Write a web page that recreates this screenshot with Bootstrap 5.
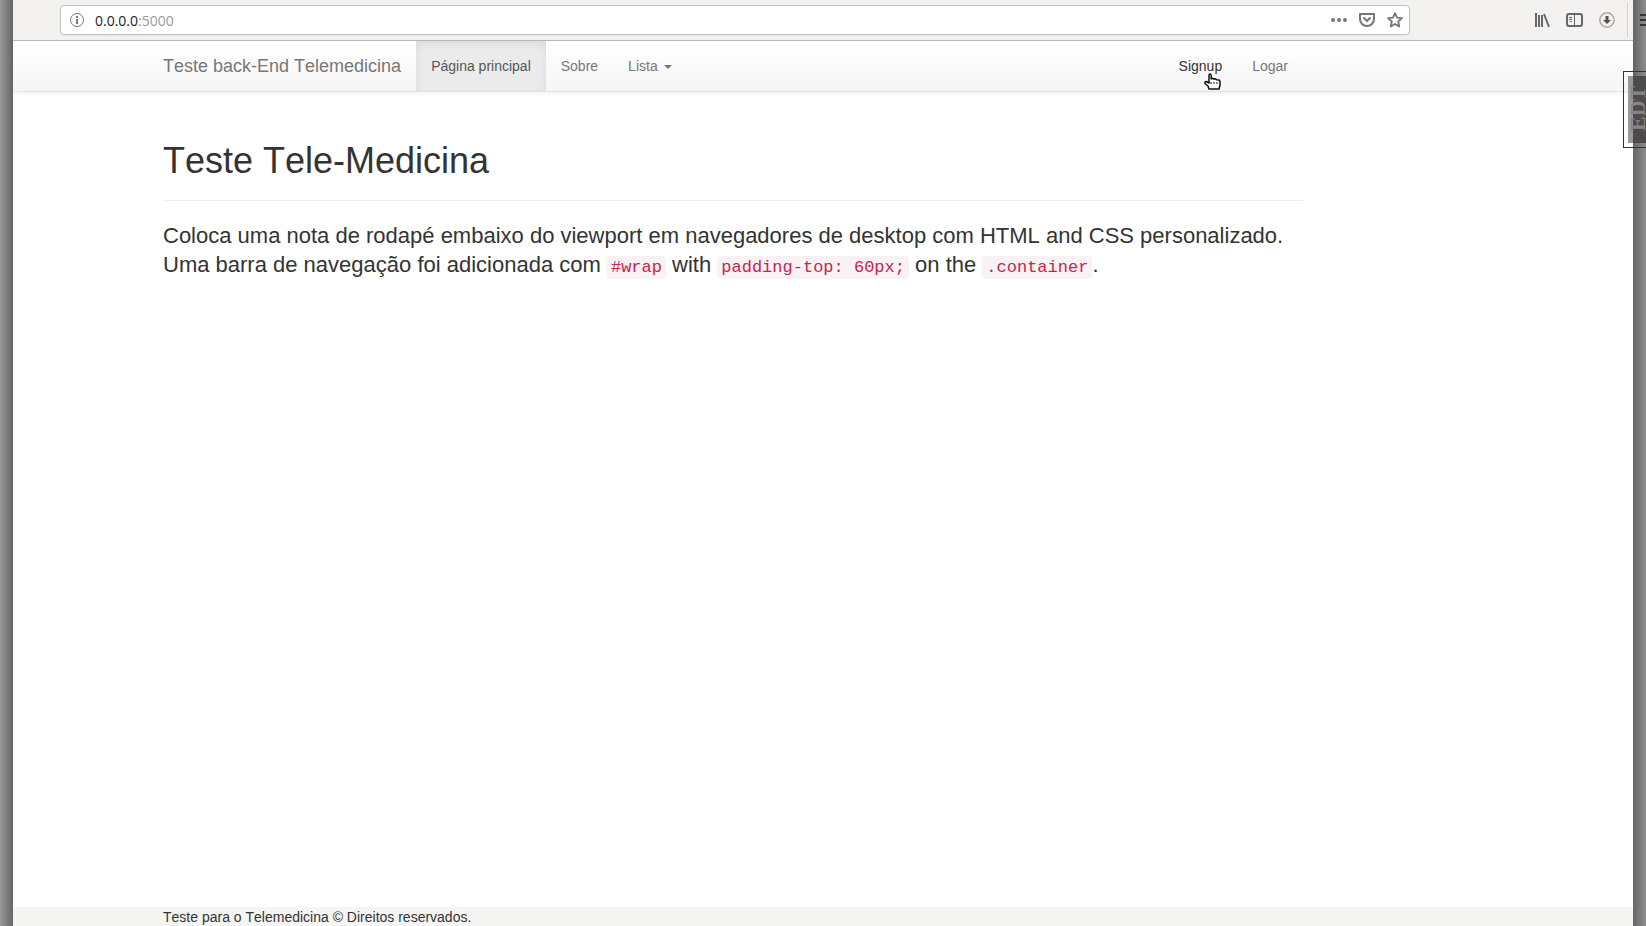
<!DOCTYPE html>
<html lang="pt-BR">
<head>
<meta charset="utf-8">
<meta name="viewport" content="width=device-width, initial-scale=1">
<title>Teste Tele-Medicina</title>
<link href="https://cdn.jsdelivr.net/npm/bootstrap@5.3.0/dist/css/bootstrap.min.css" rel="stylesheet">
<style>
  body { font-family: "Liberation Sans", Arial, sans-serif; font-size: 14px; line-height: 20px; font-kerning: none; color: #333; background: #fff; }
  .edge { flex: 0 0 13px; background: linear-gradient(90deg, #999, #666); }
  .edge-right { background: linear-gradient(90deg, #666, #8c8c8c); }
  .toolbar { height: 41px; background: #f3f2f0; border-bottom: 1px solid #bdbab7; padding: 5px 0 5px 47px; color: #66696b; }
  .address { height: 30px; margin-right: 124px; background: #fff; border: 1px solid #c5c1bd; border-radius: 4px; padding: 0 6px 0 8px; box-shadow: 0 1px 2px #0000000d; }
  .address-text { font: 14px "Open Sans", sans-serif; color: #999; margin-left: 10px; }
  .address-text b { font-weight: 400; color: #222; }
  .tool { padding: 0; border: 0; background: none; color: inherit; line-height: 0; }
  .tool svg { display: block; }
  .tool-menu { position: absolute; left: calc(100% - 6px); top: 12px; color: #333; }
  .split { width: 1px; height: 34px; background: #d6d3d0; margin-right: 5px; }
  .page-col { max-width: 1170px; margin-left: 135px; padding: 0 15px; }
  .site-nav { height: 51px; padding: 0; background: linear-gradient(#fff, #f6f6f6); border-bottom: 1px solid #e5e5e5; box-shadow: 0 1px 5px #00000013; }
  .site-nav .navbar-brand { font-size: 18px; line-height: 20px; color: #777; padding: 15px 0; margin: 0 15px 0 0; }
  .site-nav .navbar-nav .nav-link { color: #777; padding: 15px; line-height: 20px; }
  .site-nav .navbar-nav .nav-link.active { color: #555; background: #ebebeb; box-shadow: inset 0 3px 9px #00000013; }
  .site-nav .navbar-nav .nav-link.hovered { color: #333; }
  .site-nav .dropdown-toggle::after { border-top: 4px solid; border-left: 4px solid transparent; border-right: 4px solid transparent; margin-left: 6px; vertical-align: 2px; }
  .pointer { position: absolute; left: 40px; top: 32px; }
  .page-title { font-size: 36px; line-height: 40px; font-weight: 400; padding-bottom: 19px; margin: 0 0 20px; border-bottom: 1px solid #eee; }
  .intro { font-size: 22px; line-height: 29px; margin: 0; }
  .intro code { font: 17px/20px "Liberation Mono", monospace; color: #c7254e; background: #f9f2f4; border-radius: 4px; padding: 2px 4px; }
  main { padding-top: 49px; }
  .site-footer { height: 19px; background: #f5f5f4; }
  .clock-tab { position: absolute; right: 0; top: 71px; width: 23px; height: 77px; border: 1px solid #333; border-right: 0; padding: 4px 0 4px 4px; }
  .clock-face { height: 67px; background: linear-gradient(90deg, #999 5px, #4c4a4c 5px); }
  .clock-face span { display: block; writing-mode: vertical-rl; transform: rotate(180deg); font: bold 22px/20px "Liberation Serif", serif; color: #858385; height: 67px; width: 20px; padding-top: 12px; }
</style>
</head>
<body>
<div class="d-flex min-vh-100 position-relative overflow-hidden">
  <div class="edge"></div>
  <div class="flex-grow-1 d-flex flex-column">
    <div class="toolbar d-flex align-items-center">
      <div class="address d-flex align-items-center flex-grow-1">
        <button class="tool" aria-label="Info"><svg width="16" height="16" fill="none" stroke="#777"><circle cx="8" cy="8" r="6.5"/><path d="M8 7v5M8 4v2" stroke-width="2"/></svg></button>
        <div class="address-text flex-grow-1"><b>0.0.0.0</b>:5000</div>
        <button class="tool me-2" aria-label="Mais"><svg width="16" height="16" fill="#777"><circle cx="2" cy="8" r="2"/><circle cx="8" cy="8" r="2"/><circle cx="14" cy="8" r="2"/></svg></button>
        <button class="tool me-2 ms-1" aria-label="Pocket"><svg width="16" height="16" fill="none" stroke="#777" stroke-width="2" stroke-linejoin="round"><path d="M1 2h14v5a7 7 0 0 1-14 0z"/><path d="M5 6l3 3 3-3" stroke-linecap="round"/></svg></button>
        <button class="tool ms-1" aria-label="Favorito"><svg width="16" height="16" fill="none" stroke="#777" stroke-width="1.8" stroke-linejoin="round"><path d="M8 1.200l2 4.500 4.900.5-3.700 3.300 1.100 5L8 12l-4.300 2.500 1.100-5L1.100 6.200l4.900-.5z"/></svg></button>
      </div>
      <button class="tool me-3" aria-label="Biblioteca"><svg width="16" height="16" stroke="currentColor" stroke-width="2"><path d="M2 1v14M5 3v12M8 3v12M10 2l5 13" fill="none"/></svg></button>
      <button class="tool me-3" aria-label="Barra lateral"><svg width="17" height="16" fill="none" stroke="currentColor"><rect x="1" y="2" width="15" height="12" rx="2" stroke-width="2"/><path d="M8.500 2v12M3 5.500h3M3 7.500h3M4 9.500h2"/></svg></button>
      <button class="tool me-2" aria-label="Downloads"><svg width="16" height="16" fill="none"><circle cx="8" cy="8" r="7.200" stroke="#aaa" stroke-width="1.500"/><path d="M6.500 4h3v4H12l-4 4-4-4h2.500z" fill="#555"/></svg></button>
      <span class="split ms-1"></span>
    </div>
    <nav class="site-nav navbar navbar-expand">
      <div class="page-col d-flex w-100">
        <a class="navbar-brand" href="#">Teste back-End Telemedicina</a>
        <ul class="navbar-nav flex-grow-1">
          <li class="nav-item"><a class="nav-link active" href="#">Página principal</a></li>
          <li class="nav-item"><a class="nav-link" href="#">Sobre</a></li>
          <li class="nav-item"><a class="nav-link dropdown-toggle" href="#">Lista</a></li>
          <li class="nav-item ms-auto position-relative"><a class="nav-link hovered" href="#">Signup</a>
            <svg class="pointer" width="17" height="18" fill="#fff" stroke="#111" stroke-width="1.500" stroke-linejoin="round"><path d="M5 10V2.500Q5 1 6 1t1.200 1.500V6l1-.8 1.500.8 1.300-.3 1.500 1L15 7l1 1.500V12l-1 4H5l-1-3-3-2.500V9l1.500-.5z"/><path d="M7 9v2M10 9v2M13 9v2" stroke-width="1"/></svg></li>
          <li class="nav-item"><a class="nav-link" href="#">Logar</a></li>
        </ul>
      </div>
    </nav>
    <main class="flex-grow-1">
      <div class="page-col">
        <h1 class="page-title">Teste Tele-Medicina</h1>
        <p class="intro">Coloca uma nota de rodapé embaixo do viewport em navegadores de desktop com HTML and CSS personalizado. Uma barra de navegação foi adicionada com <code>#wrap</code> with <code>padding-top: 60px;</code> on the <code>.container</code>.</p>
      </div>
    </main>
    <footer class="site-footer"><div class="page-col">Teste para o Telemedicina © Direitos reservados.</div></footer>
  </div>
  <div class="edge edge-right"></div>
  <button class="tool tool-menu" aria-label="Menu"><svg width="16" height="16" stroke="currentColor" stroke-width="2"><path d="M0 3h16M0 8h16M0 13h16"/></svg></button>
  <div class="clock-tab"><div class="clock-face"><span>EDT</span></div></div>
</div>
<script src="https://cdn.jsdelivr.net/npm/bootstrap@5.3.0/dist/js/bootstrap.bundle.min.js"></script>
</body>
</html>
